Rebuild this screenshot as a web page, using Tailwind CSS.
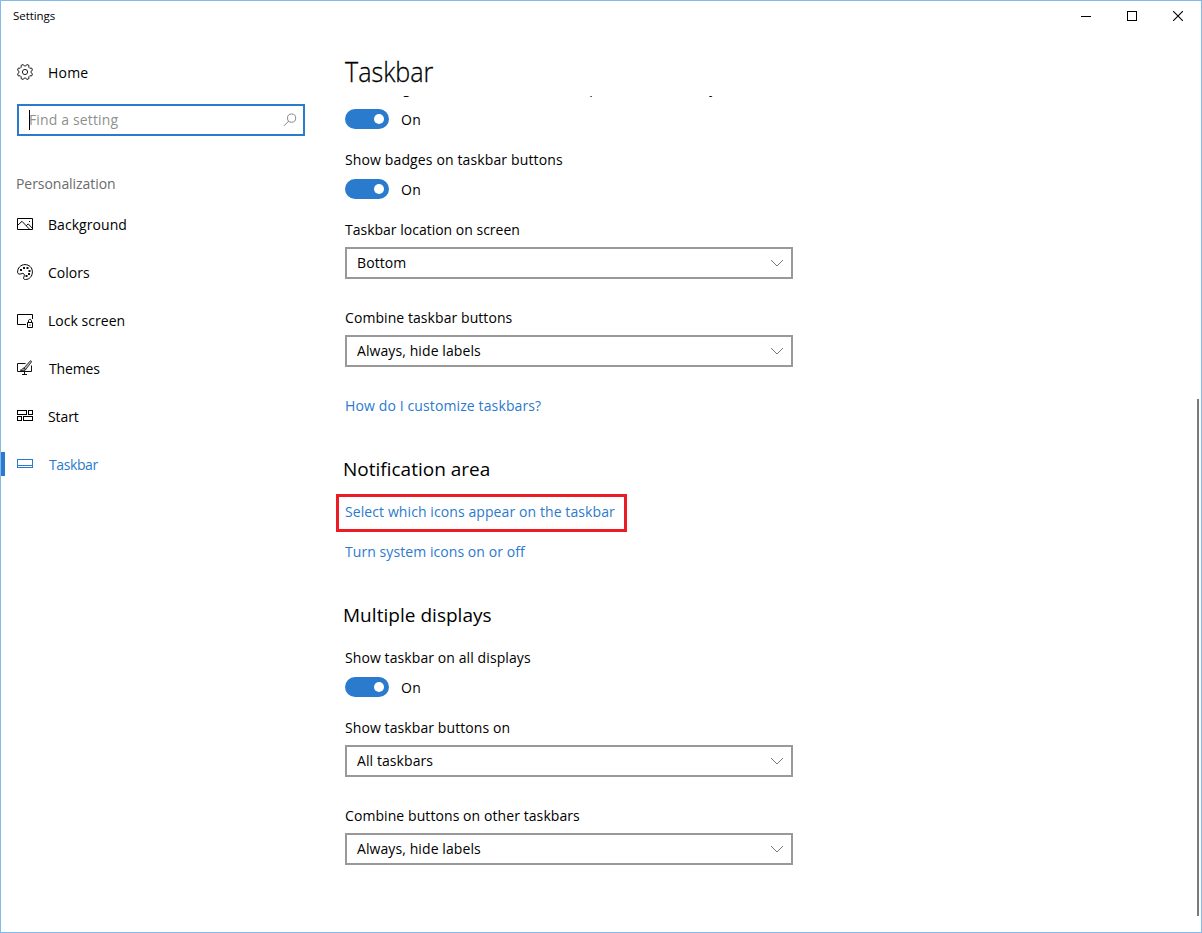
<!DOCTYPE html>
<html lang="en">
<head>
<meta charset="utf-8">
<title>Settings</title>
<script src="https://cdn.jsdelivr.net/npm/@tailwindcss/browser@4"></script>
</head>
<body class="h-[933px] w-[1202px] overflow-hidden bg-white">
<div class="flex h-[933px] w-[1202px] flex-col border border-[#83b9ec] bg-white font-['Open_Sans',sans-serif] text-[14px] leading-5 text-black">

  <!-- Title bar -->
  <header class="flex h-[30px] shrink-0 items-center justify-between pl-3">
    <span class="text-[11.5px] leading-4 tracking-[-0.05px]">Settings</span>
    <div class="flex">
      <button class="flex h-[30px] w-[46px] items-center justify-center" aria-label="Minimize"><svg width="10" height="10" shape-rendering="crispEdges"><path d="M0 5h10v1H0z"/></svg></button>
      <button class="flex h-[30px] w-[46px] items-center justify-center" aria-label="Maximize"><svg width="10" height="10" shape-rendering="crispEdges" fill="none" stroke="#000"><path d="M.5.5h9v9h-9z"/></svg></button>
      <button class="flex h-[30px] w-[46px] items-center justify-center" aria-label="Close"><svg width="10" height="10" fill="none" stroke="#000" stroke-width="1.1"><path d="M0 0l10 10M10 0L0 10"/></svg></button>
    </div>
  </header>

  <div class="flex min-h-0 flex-1">
    <!-- Navigation -->
    <aside class="flex w-[328px] shrink-0 flex-col pt-[17px]">
      <a class="flex h-12 items-center pl-4">
        <svg width="16" height="16" viewBox="0 0 16 16" fill="none" stroke="#222" stroke-linejoin="round"><circle cx="8" cy="8" r="2.600"/><path d="M14.050 8.800 15.500 9.800 14.600 12 12.840 11.710 11.710 12.840 12 14.600 9.800 15.500 8.800 14.050 7.200 14.050 6.200 15.500 4 14.600 4.290 12.840 3.160 11.710 1.400 12 .5 9.800 1.950 8.800 1.950 7.200.5 6.200 1.400 4 3.160 4.290 4.290 3.160 4 1.400 6.200.5 7.200 1.950 8.800 1.950 9.800.5 12 1.400 11.710 3.160 12.840 4.290 14.600 4 15.500 6.200 14.050 7.200z"/></svg>
        <span class="pl-[15px] pt-px tracking-[0.2px]">Home</span>
      </a>
      <div class="ml-4 mt-2 flex h-8 w-[288px] items-center border-2 border-[#2a7ace] pl-2.5 pr-[6px]">
        <span class="h-5 w-px bg-black"></span>
        <span class="flex-1 -ml-px pb-px tracking-[0.14px] text-[#8f8f8f]">Find a setting</span>
        <svg width="14" height="14" viewBox="0 0 14 14" fill="none" stroke="#888"><circle cx="8.600" cy="5.100" r="4.100"/><path d="M5.700 8.100.9 12.900"/></svg>
      </div>
      <h2 class="mt-[38px] pl-[15px] tracking-[-0.05px] text-[#6b6b6b]">Personalization</h2>
      <nav class="mt-1.5 flex flex-col">
        <a class="flex h-12 items-center pl-4">
          <svg width="16" height="16" viewBox="0 0 16 16" fill="none" stroke="#000"><path d="M.5 2.500h15v11H.5z"/><path d="M1 9l4-3.700 7.300 7.700M9.200 9.800l2-1.900 4 4.200" stroke-width=".95"/><path d="M12 5h1v1h-1z" fill="#000" stroke="none"/></svg>
          <span class="pl-[15px] pt-0.5 tracking-[0.06px]">Background</span>
        </a>
        <a class="flex h-12 items-center pl-4">
          <svg width="16" height="16" viewBox="0 0 16 16" fill="none" stroke="#000"><path d="M.6 8.300C.4 4 3.700.6 8 .6c4.200 0 7.400 3.100 7.400 7.300 0 4.400-3 7.600-6.900 7.600-1.900 0-2.300-1-1.700-2.300.7-1.600.8-2.600 0-3.400-1.300-1.100-2.400.3-3.900.3C1.500 10.100.7 9.500.6 8.300z"/><path d="M3 5h2v2H3zM6 3h2v2H6zM9.500 3h2v2h-2zM11.500 6h2v2h-2zM11 9h2v2h-2zM8.500 11h2v2h-2z" fill="#111" stroke="none"/></svg>
          <span class="pl-[15px] pt-0.5">Colors</span>
        </a>
        <a class="flex h-12 items-center pl-4">
          <svg width="16" height="16" viewBox="0 0 16 16" fill="none" stroke="#000"><path d="M9 12.500H.5v-10h15V7"/><path d="M10.500 10.500h5v5h-5zM11.500 10.500V9c0-2.200 3-2.200 3 0v1.500"/><path d="M12.500 12.500h1v1.200h-1z" fill="#000" stroke="none"/></svg>
          <span class="pl-[15px] pt-0.5 tracking-[0.03px]">Lock screen</span>
        </a>
        <a class="flex h-12 items-center pl-4">
          <svg width="16" height="16" viewBox="0 0 16 16" fill="none" stroke="#111"><path d="M8.500 3.500h-8v8h14V5.500M7.500 11.500v2.500M5 14.500h5"/><path d="M6.900 8.200 13 1.100c.8-.8 2 .1 1.400 1L8.700 9.600z" fill="#bbb" stroke-width=".8"/><path d="M6.800 8.100c-1.500 0-1.500 1.900-3.600 2.100 2 .9 5.400.6 5.600-.7z" fill="#999" stroke-width=".8"/></svg>
          <span class="pl-4 pt-0.5 tracking-[-0.14px]">Themes</span>
        </a>
        <a class="flex h-12 items-center pl-4">
          <svg width="16" height="16" viewBox="0 0 16 16" fill="none" stroke="#000" shape-rendering="crispEdges"><path d="M.5 2.500h9v4h-9zM11.500 2.500h4v4h-4zM.5 8.500h4v4h-4zM6.500 8.500h9v4h-9z"/></svg>
          <span class="pl-[15px] pt-0.5 tracking-[-0.1px]">Start</span>
        </a>
        <a class="flex h-12 items-center text-[#2a7ace]">
          <span class="h-6 w-1 bg-[#2a7ace]"></span>
          <svg class="ml-3" width="16" height="16" viewBox="0 0 16 16" fill="none" stroke="#2a7ace" shape-rendering="crispEdges"><path d="M.5 3.500h15v8H.5zM1 9.500h14"/></svg>
          <span class="pl-4 pt-0.5 tracking-[-0.4px]">Taskbar</span>
        </a>
      </nav>
    </aside>

    <!-- Page content -->
    <main class="flex min-w-0 flex-1 flex-col">
      <h1 class="ml-4 flex h-[65px] w-[110px] shrink-0 origin-left scale-x-[0.93] items-start pt-[22px] text-[27px] font-light leading-[38px] [-webkit-text-stroke:0.3px_#000]">Taskbar</h1>
      <div class="flex min-h-0 flex-1 flex-col overflow-hidden pl-4">
        <p class="-mt-[18px] h-5 shrink-0 whitespace-nowrap tracking-[0.16px]">when I right-click the start button or press Windows key+X</p>
        <div class="mt-[11px] flex h-5 shrink-0 items-center gap-3"><span class="flex h-5 w-11 items-center justify-end rounded-full bg-[#2a7ace] pr-[5px]"><span class="size-2.5 rounded-full bg-white"></span></span><span class="pt-px tracking-[0.4px]">On</span></div>
        <p class="mt-[21px] shrink-0 tracking-[0.13px]">Show badges on taskbar buttons</p>
        <div class="mt-[9px] flex h-5 shrink-0 items-center gap-3"><span class="flex h-5 w-11 items-center justify-end rounded-full bg-[#2a7ace] pr-[5px]"><span class="size-2.5 rounded-full bg-white"></span></span><span class="pt-px tracking-[0.4px]">On</span></div>
        <p class="mt-[21px] shrink-0">Taskbar location on screen</p>
        <div class="mt-[7px] flex h-8 w-[448px] shrink-0 items-center justify-between border-2 border-[#999] pl-2.5 pr-2"><span class="tracking-[0.1px]">Bottom</span><svg width="12" height="8" fill="none" stroke="#777"><path d="M0 1l6 6 6-6"/></svg></div>
        <p class="mt-[29px] shrink-0 tracking-[0.07px]">Combine taskbar buttons</p>
        <div class="mt-[7px] flex h-8 w-[448px] shrink-0 items-center justify-between border-2 border-[#999] pl-2.5 pr-2"><span class="tracking-[0.09px]">Always, hide labels</span><svg width="12" height="8" fill="none" stroke="#777"><path d="M0 1l6 6 6-6"/></svg></div>
        <a class="mt-[29px] shrink-0 tracking-[0.12px] text-[#2a7ace]">How do I customize taskbars?</a>
        <h2 class="mt-[39px] shrink-0 -ml-[2px] text-[19px] leading-7">Notification area</h2>
        <a class="-ml-[9px] mt-[11px] flex h-[38px] w-[291px] shrink-0 items-start border-3 border-[#ed1c24] pl-1.5 pt-[5px] tracking-[0.09px] text-[#2a7ace]">Select which icons appear on the taskbar</a>
        <a class="mt-[10px] shrink-0 tracking-[0.07px] text-[#2a7ace]">Turn system icons on or off</a>
        <h2 class="mt-[39px] shrink-0 -ml-[2px] text-[19px] leading-7 tracking-[0.03px]">Multiple displays</h2>
        <p class="mt-[19px] shrink-0 tracking-[0.09px]">Show taskbar on all displays</p>
        <div class="mt-[9px] flex h-5 shrink-0 items-center gap-3"><span class="flex h-5 w-11 items-center justify-end rounded-full bg-[#2a7ace] pr-[5px]"><span class="size-2.5 rounded-full bg-white"></span></span><span class="pt-px tracking-[0.4px]">On</span></div>
        <p class="mt-[21px] shrink-0 tracking-[0.09px]">Show taskbar buttons on</p>
        <div class="mt-[7px] flex h-8 w-[448px] shrink-0 items-center justify-between border-2 border-[#999] pl-2.5 pr-2"><span class="tracking-[0.08px]">All taskbars</span><svg width="12" height="8" fill="none" stroke="#777"><path d="M0 1l6 6 6-6"/></svg></div>
        <p class="mt-[29px] shrink-0 tracking-[0.08px]">Combine buttons on other taskbars</p>
        <div class="mt-[7px] flex h-8 w-[448px] shrink-0 items-center justify-between border-2 border-[#999] pl-2.5 pr-2"><span class="tracking-[0.09px]">Always, hide labels</span><svg width="12" height="8" fill="none" stroke="#777"><path d="M0 1l6 6 6-6"/></svg></div>
      </div>
    </main>

    <!-- Scrollbar -->
    <div class="flex w-1 shrink-0 flex-col pt-[368px]"><span class="h-[517px] w-0.5 bg-[#7a7a7a]"></span></div>
  </div>
</div>
</body>
</html>
